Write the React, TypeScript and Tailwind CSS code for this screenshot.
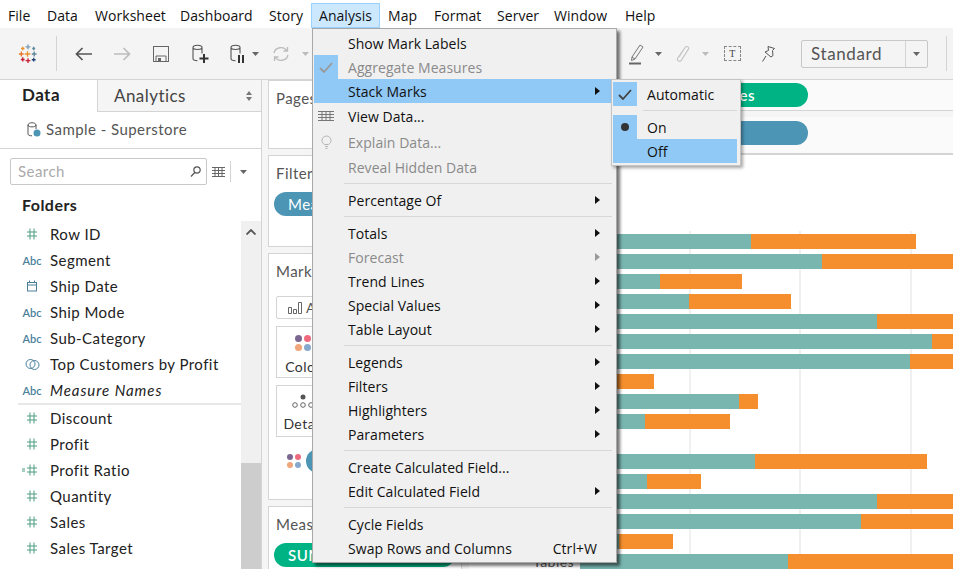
const menuBar = [
  { label: "File", w: "w-[39px]" },
  { label: "Data", w: "w-[48px]" },
  { label: "Worksheet", w: "w-[85px]" },
  { label: "Dashboard", w: "w-[89px]" },
  { label: "Story", w: "w-[42px]" },
];
const menuBarRest = [
  { label: "Map", w: "w-[46px]" },
  { label: "Format", w: "w-[63px]" },
  { label: "Server", w: "w-[57px]" },
  { label: "Window", w: "w-[71px]" },
  { label: "Help", w: "w-[60px]" },
];

// teal end / orange end, as px from the start of the bar
const bars = [
  [171, 165], [242, 140], [80, 82], [109, 102], [297, 90], [352, 40], [330, 60], [30, 44],
  [159, 19], [65, 85], [0, 0], [175, 172], [67, 54], [297, 90], [281, 100], [39, 54], [208, 180],
];

function Hash({ calc }: { calc?: boolean }) {
  return (
    <svg width="20" height="12" viewBox="0 0 20 12" fill="none" stroke="#4f9d82" strokeWidth="1">
      <path d="M8 .5v11M12 .5v11M5 4h10M5 8h10" />
      {calc && <path d="M0 5h3M0 7h3" />}
    </svg>
  );
}

function Abc() {
  return <span className="text-[11px] font-semibold text-[#4a7f9c] leading-none tracking-normal">Abc</span>;
}

function Calendar() {
  return (
    <svg width="12" height="12" viewBox="0 0 12 12" fill="none" stroke="#4a7f9c" strokeWidth="1">
      <rect x="1.5" y="2.5" width="9" height="8.5" />
      <path d="M1.5 5h9M3.5 .5v2M8.5 .5v2" />
    </svg>
  );
}

function SetIcon() {
  return (
    <svg width="15" height="13" viewBox="0 0 15 13" fill="none" stroke="#4a7f9c" strokeWidth="1">
      <circle cx="5.5" cy="6" r="4.5" />
      <circle cx="9.5" cy="7" r="4.5" />
    </svg>
  );
}

function Field({ icon, label, italic }: { icon: React.ReactNode; label: string; italic?: boolean }) {
  return (
    <div className="h-[26px] flex items-center">
      <div className="ml-[20px] w-[24px] flex justify-center">{icon}</div>
      <span className={"ml-[6px] text-[15px] text-[#222] whitespace-nowrap " + (italic ? "italic tracking-[0.95px]" : "")}>{label}</span>
    </div>
  );
}

function Logo() {
  const c = [
    ["M10.5 1v5M8 3.5h5", "#7b99b8"],
    ["M16.5 3.5v3.5M15 5.2h3", "#59879b"],
    ["M5 3.5v3.5M3.2 5.2h3.6", "#eb912b"],
    ["M10 8v6M7 11h6", "#eb912b"],
    ["M3.5 8.5v5M1 11h5", "#e8762b"],
    ["M17 8.5v5M14.5 11h5", "#5b879b"],
    ["M5 14.5v4.5M3 16.8h4", "#c72035"],
    ["M10.5 15.5v5M8 18h5", "#c72035"],
    ["M16.5 15v4M14.5 17h4", "#1f447a"],
  ];
  return (
    <svg width="20" height="22" viewBox="0 0 21 22" fill="none" strokeWidth="1.4">
      {c.map(([d, col]) => <path key={d} d={d} stroke={col} />)}
    </svg>
  );
}

function Caret({ color = "#666" }: { color?: string }) {
  return (
    <svg width="7" height="4" viewBox="0 0 7 4"><path d="M0 0h7L3.5 4z" fill={color} /></svg>
  );
}

function Cylinder({ badge }: { badge: "plus" | "pause" }) {
  return (
    <svg width="17" height="20" viewBox="0 0 17 20" fill="none" stroke="#555" strokeWidth="1.1">
      <path d="M1 3.5c0-3 9-3 9 0v6M1 3.5c0 2.6 9 2.6 9 0M1 3.5v11c0 1.500 2 2.200 4.500 2.200" />
      {badge === "plus" ? (
        <path d="M12 10v9M7.500 14.500h9" stroke="#333" strokeWidth="2" />
      ) : (
        <path d="M9 11v8M13 11v8" stroke="#333" strokeWidth="2" />
      )}
    </svg>
  );
}

function Toolbar() {
  return (
    <div className="h-[52px] bg-[#f4f4f4] border-b border-[#d4d4d4] flex items-center shrink-0">
      <div className="w-[56px] flex justify-center"><Logo /></div>
      <div className="w-px h-[35px] bg-[#d4d4d4]" />
      <div className="ml-[18px] flex items-center">
        <svg width="17" height="14" viewBox="0 0 17 14" fill="none" stroke="#555" strokeWidth="1.7">
          <path d="M17 7H1.5M7.5 1 1.5 7l6 6" />
        </svg>
        <svg className="ml-[22px]" width="17" height="14" viewBox="0 0 17 14" fill="none" stroke="#bcbcbc" strokeWidth="1.7">
          <path d="M0 7h15.5M9.5 1l6 6-6 6" />
        </svg>
        <svg className="ml-[22px]" width="16" height="16" viewBox="0 0 16 16" fill="none" stroke="#666" strokeWidth="1">
          <rect x=".5" y=".5" width="15" height="15" />
          <path d="M3 15V10h10v5" />
          <rect x="5" y="12" width="3" height="3" fill="#666" stroke="none" />
        </svg>
        <div className="ml-[23px]"><Cylinder badge="plus" /></div>
        <div className="ml-[21px]"><Cylinder badge="pause" /></div>
        <div className="ml-[5px]"><Caret /></div>
        <svg className="ml-[13px]" width="18" height="16" viewBox="0 0 18 16" fill="none" stroke="#bcbcbc" strokeWidth="1.3">
          <path d="M2 7a7 6.500 0 0 1 13-2M16 9A7 6.500 0 0 1 3 11M15.500 1v4h-4M2.500 15v-4h4" />
        </svg>
        <div className="ml-[12px]"><Caret color="#bbb" /></div>
      </div>
      <div className="flex-1" />
      <svg width="18" height="22" viewBox="0 0 18 22" fill="none" stroke="#777" strokeWidth="1">
        <path d="M4 14 12 2l3 2-8 12-3.500 1.500zM4 14l3 2" />
        <path d="M1 20.500h12" stroke="#666" strokeWidth="2" />
      </svg>
      <div className="ml-[9px]"><Caret /></div>
      <svg className="ml-[14px]" width="14" height="18" viewBox="0 0 14 18" fill="none" stroke="#c4c4c4" strokeWidth="1.2">
        <path d="M3 12 9 2.500c1.500-2 4.500-.5 3.500 1.500L5.500 15c-1.500 2.500-5 .8-4-1.500L8 4" />
      </svg>
      <div className="ml-[12px]"><Caret color="#bbb" /></div>
      <div className="ml-[15px] w-[17px] h-[15px] border border-dashed border-[#888] flex items-center justify-center">
        <span className="text-[10px] leading-none text-[#444] font-['Liberation_Serif',serif]">T</span>
      </div>
      <svg className="ml-[20px]" width="16" height="18" viewBox="0 0 16 18" fill="none" stroke="#555" strokeWidth="1">
        <path d="M7 1.500l6.500 2-2 2 .5 5-2 1.500-6-5 3.500-1.500zM5 11 1.500 16.500" />
      </svg>
      <div className="ml-[24px] w-[127px] h-[28px] border border-[#c8c8c8] rounded-[2px] flex items-center">
        <span className="pl-[9px] flex-1 text-[17px] text-[#555] tracking-[0.6px]">Standard</span>
        <div className="w-[22px] h-full border-l border-[#d4d4d4] flex items-center justify-center"><Caret /></div>
      </div>
      <div className="ml-[18px] w-px h-[35px] bg-[#d4d4d4]" />
      <div className="w-[6px]" />
    </div>
  );
}

function Sidebar() {
  return (
    <div className="w-[262px] shrink-0 bg-white border-r border-[#d4d4d4] flex flex-col text-[#222]">
      <div className="h-[32px] flex shrink-0">
        <div className="w-[97px] pl-[22px] text-[17px] font-bold leading-[30px] text-[#222]">Data</div>
        <div className="flex-1 bg-[#f5f5f5] border-l border-b border-[#d4d4d4] pl-[16px] pr-[9px] flex items-center justify-between">
          <span className="text-[17px] text-[#444]">Analytics</span>
          <svg width="6" height="10" viewBox="0 0 6 10"><path d="M3 0l3 4H0zM3 10l3-4H0z" fill="#777" /></svg>
        </div>
      </div>
      <div className="h-[37px] border-b border-[#d4d4d4] flex items-center pl-[27px] pb-[2px] shrink-0">
        <svg width="14" height="15" viewBox="0 0 14 15" fill="none" stroke="#555" strokeWidth="1">
          <path d="M1 3c0-3 8-3 8 0v4M1 3c0 2.500 8 2.500 8 0M1 3v9c0 1 1.500 1.800 4 1.800" />
          <circle cx="10" cy="11" r="3.500" fill="#4c95b4" stroke="none" />
        </svg>
        <span className="ml-[5px] text-[15px] text-[#555]">Sample - Superstore</span>
      </div>
      <div className="mt-[9px] ml-[10px] flex items-center shrink-0">
        <div className="w-[197px] h-[27px] border border-[#c8c8c8] rounded-[2px] flex items-center justify-between pl-[7px] pr-[5px]">
          <span className="text-[15px] text-[#aaa]">Search</span>
          <svg width="11" height="11" viewBox="0 0 11 11" fill="none" stroke="#555" strokeWidth="1.2">
            <circle cx="7" cy="4" r="3.200" />
            <path d="M4.800 6.500 1 10.500" />
          </svg>
        </div>
        <svg className="ml-[5px]" width="13" height="10" viewBox="0 0 13 10" fill="none" stroke="#666" strokeWidth="1">
          <path d="M0 .5h13M0 3.500h13M0 6.500h13M0 9.500h13M3 0v10M6.500 0v10M10 0v10" />
        </svg>
        <div className="ml-[5px] w-px h-[21px] bg-[#d4d4d4]" />
        <div className="ml-[9px]"><Caret /></div>
      </div>
      <div className="h-[36px] pl-[22px] pt-[4px] flex items-center text-[16px] font-bold text-[#222] shrink-0">Folders</div>
      <div className="flex-1 flex min-h-0">
        <div className="w-[241px]">
          <Field icon={<Hash />} label="Row ID" />
          <Field icon={<Abc />} label="Segment" />
          <Field icon={<Calendar />} label="Ship Date" />
          <Field icon={<Abc />} label="Ship Mode" />
          <Field icon={<Abc />} label="Sub-Category" />
          <Field icon={<SetIcon />} label="Top Customers by Profit" />
          <Field icon={<Abc />} label="Measure Names" italic />
          <div className="ml-[18px] h-[2px] bg-[#e8e8e8]" />
          <Field icon={<Hash />} label="Discount" />
          <Field icon={<Hash />} label="Profit" />
          <Field icon={<Hash calc />} label="Profit Ratio" />
          <Field icon={<Hash />} label="Quantity" />
          <Field icon={<Hash />} label="Sales" />
          <Field icon={<Hash />} label="Sales Target" />
        </div>
        <div className="flex-1 bg-[#f0f0f0] flex flex-col">
          <div className="h-[242px] pt-[8px] flex justify-center">
            <svg width="10" height="6" viewBox="0 0 10 6" fill="none" stroke="#555" strokeWidth="1.800"><path d="M.5 5.500 5 1l4.500 4.500" /></svg>
          </div>
          <div className="flex-1 bg-[#cdcdcd]" />
        </div>
      </div>
    </div>
  );
}

function Card({ className, title, children }: { className: string; title: string; children?: React.ReactNode }) {
  return (
    <div className={"border border-[#d4d4d4] bg-white overflow-hidden shrink-0 " + className}>
      <div className="pl-[7px] pt-[7px] text-[15px] text-[#555] leading-[20px]">{title}</div>
      {children}
    </div>
  );
}

function Dots({ small }: { small?: boolean }) {
  const dot = small ? "w-[6px] h-[6px] rounded-full " : "w-[7px] h-[7px] rounded-full ";
  return (
    <div className={"grid grid-cols-2 gap-[2px] " + (small ? "w-[14px]" : "w-[16px]")}>
      <span className={dot + "bg-[#7b6690]"} />
      <span className={dot + "bg-[#ef6a7f]"} />
      <span className={dot + "bg-[#f0a57a]"} />
      <span className={dot + "bg-[#86a8cc]"} />
    </div>
  );
}

function Cards() {
  return (
    <div className="w-[194px] shrink-0 flex flex-col gap-[6px] text-[#555]">
      <Card className="h-[69px]" title="Pages" />
      <Card className="h-[92px]" title="Filters">
        <div className="ml-[5px] mt-[9px] h-[24px] w-[175px] rounded-full bg-[#4c95b4] pl-[14px] text-[15px] leading-[24px] text-white">Measure Names</div>
      </Card>
      <Card className="h-[247px]" title="Marks">
        <div className="ml-[7px] mt-[15px] w-[175px] h-[23px] border border-[#d4d4d4] rounded-[2px] flex items-center pl-[11px]">
          <svg width="14" height="12" viewBox="0 0 14 12" fill="none" stroke="#666" strokeWidth="1"><path d="M.5 5.500h3v6h-3zM5.500 7.500h3v4h-3zM10.500 .5h3v11h-3z" /></svg>
          <span className="ml-[4px] text-[14px]">Automatic</span>
        </div>
        <div className="ml-[7px] mt-[7px] w-[54px] h-[52px] border border-[#d4d4d4] flex flex-col items-center pt-[8px]">
          <Dots />
          <span className="mt-[5px] text-[14px] text-[#333]">Color</span>
        </div>
        <div className="ml-[7px] mt-[7px] w-[54px] h-[52px] border border-[#d4d4d4] flex flex-col items-center pt-[8px]">
          <svg width="26" height="15" viewBox="0 0 26 15" fill="none" stroke="#666" strokeWidth="1">
            <circle cx="13" cy="3" r="2.500" fill="#555" stroke="none" />
            <circle cx="5" cy="11" r="2.300" /><circle cx="13" cy="11" r="2.300" /><circle cx="21" cy="11" r="2.300" />
          </svg>
          <span className="mt-[4px] text-[14px] text-[#333]">Detail</span>
        </div>
        <div className="ml-[18px] mt-[12px] flex items-center gap-[5px]">
          <Dots small />
          <div className="w-[150px] h-[24px] rounded-full bg-[#4c95b4]" />
        </div>
      </Card>
      <Card className="h-[80px]" title="Measure Values">
        <div className="ml-[5px] mt-[9px] h-[24px] w-[181px] rounded-full bg-[#00b384] pl-[14px] text-[15px] leading-[24px] font-semibold text-white">SUM(Sales)</div>
      </Card>
    </div>
  );
}

function Main() {
  return (
    <div className="flex-1 min-w-0 ml-[7px] flex flex-col">
      <div className="h-[31px] shrink-0 bg-[#fafafa] border-b border-[#d4d4d4] flex items-center pl-[111px]">
        <div className="w-[228px] h-[24px] mt-[-1px] rounded-full bg-[#00b384] text-right pr-[53px] text-[15px] font-semibold leading-[24px] text-white">Measure Values</div>
      </div>
      <div className="h-[38px] mt-[6px] shrink-0 bg-[#fafafa] border-b-2 border-[#d4d4d4] flex items-start pt-[4px] pl-[111px]">
        <div className="w-[228px] h-[24px] rounded-full bg-[#4c95b4]" />
      </div>
      <div className="relative flex-1 bg-white overflow-hidden pt-[79px]">
        <div className="absolute left-[220px] top-[76px] bottom-0 w-[2px] bg-[#f0f0f0]" />
        <div className="absolute left-[330px] top-[76px] bottom-0 w-[2px] bg-[#f0f0f0]" />
        <div className="absolute left-[441px] top-[76px] bottom-0 w-[2px] bg-[#f0f0f0]" />
        <div className="relative flex flex-col gap-[5px]">
          {bars.map(([teal, orange], i) => (
            <div key={i} className="h-[15px] flex items-center shrink-0">
              <div className="w-[111px] shrink-0 pr-[6px] text-right text-[14px] leading-[15px] text-[#555]">{i === 16 ? "Tables" : ""}</div>
              <div className="h-full bg-[#79b6b0] shrink-0" style={{ width: teal }} />
              <div className="h-full bg-[#f58f2d] shrink-0" style={{ width: orange }} />
            </div>
          ))}
        </div>
      </div>
    </div>
  );
}

function Arrow({ color = "#111" }: { color?: string }) {
  return <svg width="5" height="8" viewBox="0 0 5 8"><path d="M0 0l5 4-5 4z" fill={color} /></svg>;
}

function Check({ color }: { color: string }) {
  return (
    <svg width="14" height="11" viewBox="0 0 14 11" fill="none" stroke={color} strokeWidth="1.800"><path d="M1 6l4 4 8-9" /></svg>
  );
}

type RowProps = {
  label: string;
  disabled?: boolean;
  arrow?: boolean;
  hl?: boolean;
  h?: string;
  icon?: React.ReactNode;
  iconHl?: boolean;
  shortcut?: string;
};

function Row({ label, disabled, arrow, hl, h = "h-[24px]", icon, iconHl, shortcut }: RowProps) {
  return (
    <div className={h + " flex items-center shrink-0 " + (hl ? "bg-[#90c8f6]" : "")}>
      <div className={"w-[24px] h-full flex items-center justify-center shrink-0 " + (iconHl ? "bg-[#90c8f6]" : "")}>{icon}</div>
      <span className={"ml-[10px] flex-1 whitespace-nowrap " + (disabled ? "text-[#8a8a8a]" : "text-[#111]")}>{label}</span>
      {shortcut && <span className="mr-[18px] text-[#111]">{shortcut}</span>}
      {arrow && <div className="w-[20px] flex items-center"><Arrow color={disabled ? "#999" : "#111"} /></div>}
    </div>
  );
}

function Sep() {
  return (
    <div className="h-[9px] flex items-center pl-[30px] pr-[3px] shrink-0">
      <div className="w-full h-px bg-[#d7d7d7]" />
    </div>
  );
}

function AnalysisMenu() {
  return (
    <div className="absolute left-[312px] top-[28px] w-[305px] h-[535px] bg-[#f0f0f0] border border-[#a8a8a8] shadow-[3px_3px_3px_rgba(0,0,0,0.55)] pt-[2px] pl-[1px] pr-[1px] flex flex-col text-[14px] font-['Open_Sans',sans-serif] tracking-[0.05px]">
      <Row label="Show Mark Labels" />
      <Row label="Aggregate Measures" disabled iconHl icon={<Check color="#9a9a9a" />} />
      <Row label="Stack Marks" hl arrow />
      <Row label="View Data..." h="h-[26px]" icon={
        <svg width="16" height="11" viewBox="0 0 16 11" fill="none" stroke="#777" strokeWidth="1"><path d="M0 .5h16M0 3.500h16M0 6.500h16M0 9.500h16M4 0v10M8 0v10M12 0v10" /></svg>
      } />
      <Row label="Explain Data..." disabled h="h-[26px]" icon={
        <svg width="11" height="15" viewBox="0 0 11 15" fill="none" stroke="#b4b4b4" strokeWidth="1"><path d="M3.500 9.500C2 8.500 1 7.200 1 5.500a4.500 4.500 0 0 1 9 0c0 1.700-1 3-2.500 4zM4 11.500h3M4.500 13.500h2" /></svg>
      } />
      <Row label="Reveal Hidden Data" disabled />
      <Sep />
      <Row label="Percentage Of" arrow />
      <Sep />
      <Row label="Totals" arrow />
      <Row label="Forecast" disabled arrow />
      <Row label="Trend Lines" arrow />
      <Row label="Special Values" arrow />
      <Row label="Table Layout" arrow />
      <Sep />
      <Row label="Legends" arrow />
      <Row label="Filters" arrow />
      <Row label="Highlighters" arrow />
      <Row label="Parameters" arrow />
      <Sep />
      <Row label="Create Calculated Field..." />
      <Row label="Edit Calculated Field" arrow />
      <Sep />
      <Row label="Cycle Fields" />
      <Row label="Swap Rows and Columns" shortcut="Ctrl+W" />
    </div>
  );
}

function StackSubmenu() {
  return (
    <div className="absolute left-[611px] top-[79px] w-[130px] h-[87px] bg-[#f0f0f0] border border-[#c4c4c4] shadow-[2px_2px_3px_rgba(0,0,0,0.35)] pt-[2px] pl-[1px] pr-[3px] flex flex-col text-[14px] font-['Open_Sans',sans-serif] tracking-[0.05px]">
      <Row label="Automatic" iconHl icon={<Check color="#444" />} />
      <div className="h-[9px] flex items-center pl-[30px] shrink-0"><div className="w-full h-px bg-[#d7d7d7]" /></div>
      <Row label="On" iconHl icon={<span className="w-[8px] h-[8px] rounded-full bg-[#333]" />} />
      <Row label="Off" hl />
    </div>
  );
}

export default function App() {
  return (
    <div className="relative w-[953px] h-[569px] overflow-hidden bg-white flex flex-col font-['Lato',sans-serif] tracking-[0.45px]">
      <div className="h-[28px] pt-[3px] flex items-center shrink-0 text-[14px] text-[#111] font-['Open_Sans',sans-serif] tracking-[0.05px]">
        {menuBar.map((m) => (
          <div key={m.label} className={m.w + " pl-[8px] whitespace-nowrap"}>{m.label}</div>
        ))}
        <div className="w-[69px] h-[25px] ml-[8px] border border-[#99d1ff] bg-[#cce8ff] pl-[7px] leading-[23px]">Analysis</div>
        {menuBarRest.map((m) => (
          <div key={m.label} className={m.w + " pl-[8px] whitespace-nowrap"}>{m.label}</div>
        ))}
      </div>
      <Toolbar />
      <div className="flex-1 flex min-h-0 bg-[#f5f5f5]">
        <Sidebar />
        <div className="w-[6px] shrink-0" />
        <Cards />
        <Main />
      </div>
      <AnalysisMenu />
      <StackSubmenu />
    </div>
  );
}
